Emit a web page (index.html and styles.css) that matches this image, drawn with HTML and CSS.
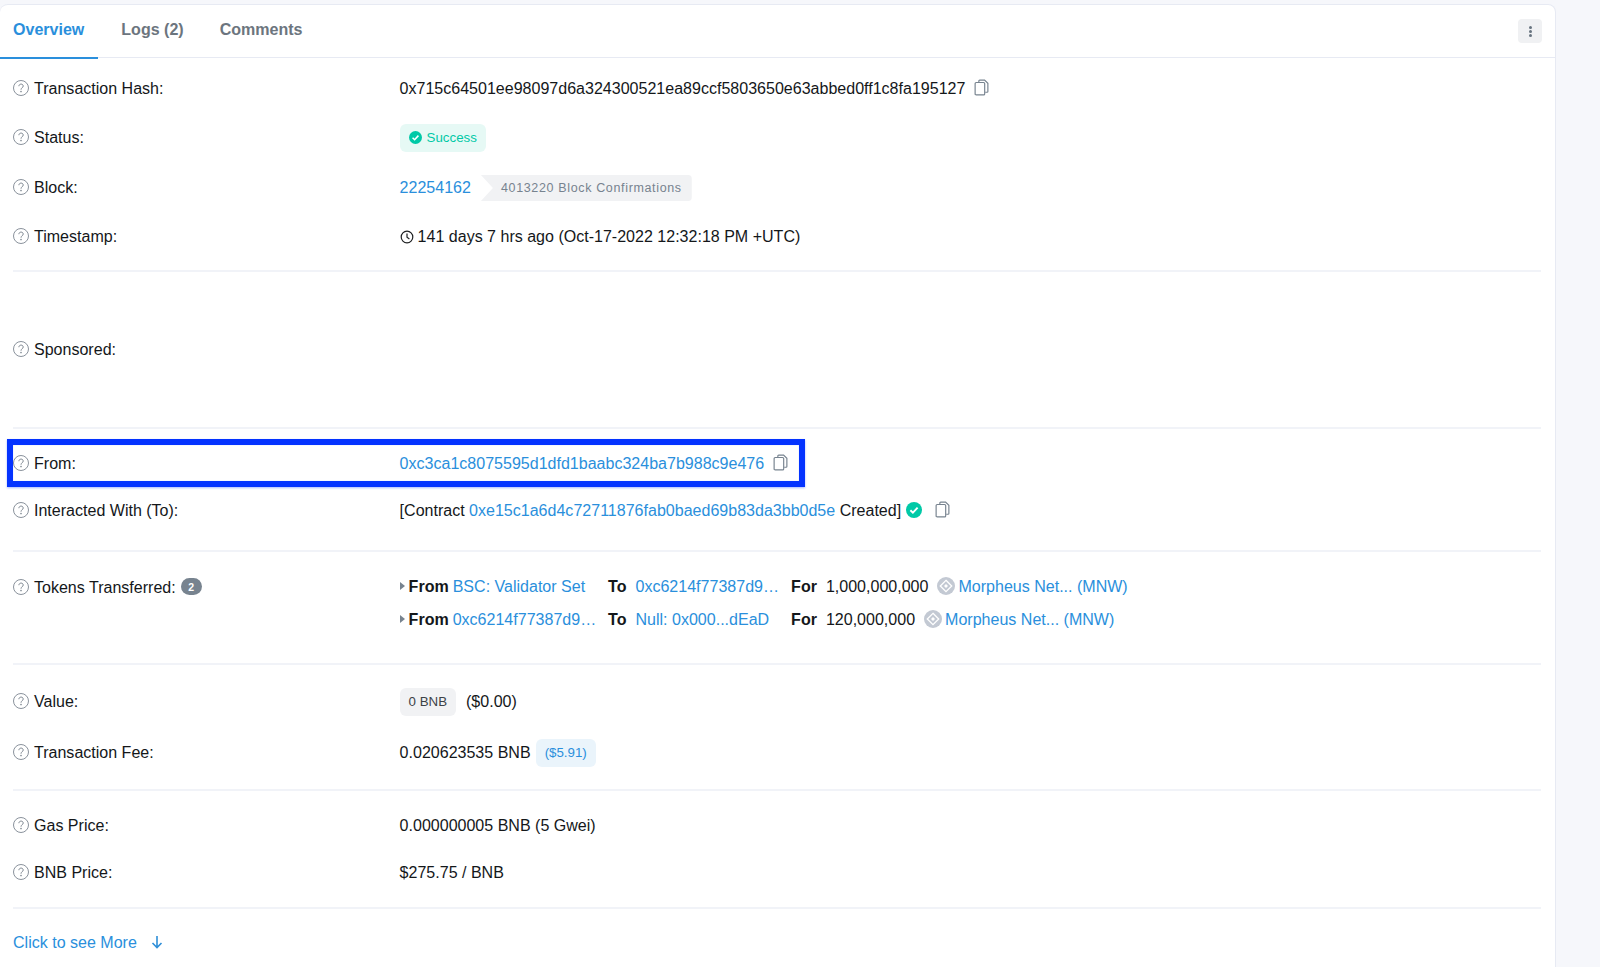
FILE: index.html
```html
<!DOCTYPE html>
<html lang="en">
<head>
<meta charset="utf-8">
<title>Transaction Details</title>
<link rel="stylesheet" href="styles.css">
</head>
<body>
<svg class="sprite" aria-hidden="true">
  <symbol id="q" viewBox="0 0 16 16"><circle cx="8" cy="8" r="7.5" fill="none" stroke="#8a929c" stroke-width="1"/><path d="M5.9 6.2c0-1.3 1-2.1 2.2-2.1s2.1.8 2.1 1.9c0 1.8-2.2 1.8-2.2 3.7" fill="none" stroke="#7c858f" stroke-width="1"/><circle cx="8" cy="11.6" r=".8" fill="#7c858f"/></symbol>
  <symbol id="copy" viewBox="0 0 14 16"><path d="M4.5 3V1.8c0-.5.3-.8.8-.8h4.6l3.1 3.1v7.6c0 .5-.3.8-.8.8H10.500" fill="none" stroke="#77838f" stroke-width="1.100"/><rect x="1" y="3.300" width="9" height="11.700" rx="1" fill="#fff" stroke="#77838f" stroke-width="1.100"/></symbol>
  <symbol id="check" viewBox="0 0 16 16"><circle cx="8" cy="8" r="8" fill="#00c9a7"/><path d="M4.400 8.300l2.500 2.400 4.700-5" fill="none" stroke="#fff" stroke-width="1.900"/></symbol>
  <symbol id="clock" viewBox="0 0 14 14"><circle cx="7" cy="7" r="5.800" fill="none" stroke="#1e2022" stroke-width="1.200"/><path d="M7 3.600V7.300l2.400 1.700" fill="none" stroke="#1e2022" stroke-width="1.200"/></symbol>
  <symbol id="coin" viewBox="0 0 18 18"><circle cx="9" cy="9" r="9" fill="#c3c9d3"/><path d="M9 3.300l5.700 5.700L9 14.700 3.300 9z" fill="none" stroke="#fff" stroke-width="1.300"/><path d="M9 7l2 2-2 2-2-2z" fill="#fff"/></symbol>
  <symbol id="arrow" viewBox="0 0 12 14"><path d="M6 1v11.500M1.500 8L6 12.500 10.500 8" fill="none" stroke="#2f8fd8" stroke-width="1.600"/></symbol>
</svg>

<main class="card">
  <header class="tabs">
    <a class="tab tab-active">Overview</a>
    <a class="tab">Logs (2)</a>
    <a class="tab">Comments</a>
    <button class="kebab" aria-label="More"><i></i><i></i><i></i></button>
  </header>

  <section class="section s-top">
    <div class="row h49"><div class="label"><svg class="qi"><use href="#q"/></svg>Transaction Hash:</div>
      <div class="value">0x715c64501ee98097d6a324300521ea89ccf5803650e63abbed0ff1c8fa195127<svg class="copy gap-copy"><use href="#copy"/></svg></div></div>
    <div class="row h49 mb1"><div class="label"><svg class="qi"><use href="#q"/></svg>Status:</div>
      <div class="value"><span class="badge-success"><svg class="check-sm"><use href="#check"/></svg>Success</span></div></div>
    <div class="row h50"><div class="label"><svg class="qi"><use href="#q"/></svg>Block:</div>
      <div class="value"><a class="link">22254162</a><span class="confirm">4013220 Block Confirmations</span></div></div>
    <div class="row h47"><div class="label"><svg class="qi"><use href="#q"/></svg>Timestamp:</div>
      <div class="value"><svg class="clock"><use href="#clock"/></svg>141 days 7 hrs ago (Oct-17-2022 12:32:18 PM +UTC)</div></div>
  </section>

  <section class="section s-sponsor">
    <div class="row"><div class="label"><svg class="qi"><use href="#q"/></svg>Sponsored:</div></div>
  </section>

  <section class="section s-addr">
    <div class="row h47 highlighted"><div class="label"><svg class="qi"><use href="#q"/></svg>From:</div>
      <div class="value"><a class="link">0xc3ca1c8075595d1dfd1baabc324ba7b988c9e476</a><svg class="copy gap-copy"><use href="#copy"/></svg></div></div>
    <div class="row h47"><div class="label"><svg class="qi"><use href="#q"/></svg>Interacted With (To):</div>
      <div class="value">[Contract&nbsp;<a class="link">0xe15c1a6d4c72711876fab0baed69b83da3bb0d5e</a>&nbsp;Created]<svg class="check-md"><use href="#check"/></svg><svg class="copy gap-copy2"><use href="#copy"/></svg></div></div>
  </section>

  <section class="section s-tokens">
    <div class="row-top">
      <div class="label label-line"><svg class="qi"><use href="#q"/></svg>Tokens Transferred:<span class="count">2</span></div>
      <div class="transfers">
        <div class="transfer">
          <span class="t-from"><i class="caret"></i><b>From</b><a class="link">BSC: Validator Set</a></span>
          <span class="t-to"><b>To</b><a class="link">0xc6214f77387d9…</a></span>
          <span class="t-for"><b>For</b><span>1,000,000,000</span><svg class="coin"><use href="#coin"/></svg><a class="link">Morpheus Net... (MNW)</a></span>
        </div>
        <div class="transfer">
          <span class="t-from"><i class="caret"></i><b>From</b><a class="link">0xc6214f77387d9…</a></span>
          <span class="t-to"><b>To</b><a class="link">Null: 0x000...dEaD</a></span>
          <span class="t-for"><b>For</b><span>120,000,000</span><svg class="coin"><use href="#coin"/></svg><a class="link">Morpheus Net... (MNW)</a></span>
        </div>
      </div>
    </div>
  </section>

  <section class="section s-value">
    <div class="row h51"><div class="label"><svg class="qi"><use href="#q"/></svg>Value:</div>
      <div class="value"><span class="badge-grey">0 BNB</span>($0.00)</div></div>
    <div class="row h51"><div class="label"><svg class="qi"><use href="#q"/></svg>Transaction Fee:</div>
      <div class="value">0.020623535 BNB<span class="badge-blue">($5.91)</span></div></div>
  </section>

  <section class="section s-gas">
    <div class="row h48"><div class="label"><svg class="qi"><use href="#q"/></svg>Gas Price:</div>
      <div class="value">0.000000005 BNB (5 Gwei)</div></div>
    <div class="row h46"><div class="label"><svg class="qi"><use href="#q"/></svg>BNB Price:</div>
      <div class="value">$275.75 / BNB</div></div>
  </section>

  <footer class="more"><a class="link">Click to see More</a><svg class="arrow"><use href="#arrow"/></svg></footer>
</main>
</body>
</html>
```
FILE: styles.css
```css
*, *::after { box-sizing: border-box; }
html, body { height: 100%; }
body {
  margin: 0;
  overflow: hidden;
  background: #f6f7fb;
  color: #14171a;
  font-family: "Liberation Sans", Arial, sans-serif;
  font-size: 16.050px;
  line-height: 20px;
}
.sprite { display: none; }
.card {
  width: 1556px;
  height: 975px;
  margin-top: 4px;
  background: #fff;
  border: 1px solid #e7eaf3;
  border-left: 0;
  border-radius: 8px;
}
.tabs {
  position: relative;
  display: flex;
  height: 53px;
  border-bottom: 1px solid #e7eaf3;
}
.tab {
  padding: 14px 13px 0;
  margin-right: 10px;
  font-weight: 700;
  color: #6c757e;
}
.tab-active {
  color: #2a8fdc;
  height: 54px;
  padding-right: 14px;
  border-bottom: 2px solid #2a8fdc;
  margin-right: 10px;
}
.kebab {
  position: absolute;
  right: 13px;
  top: 14px;
  display: flex;
  flex-direction: column;
  align-items: center;
  justify-content: center;
  gap: 1px;
  width: 24px;
  height: 24px;
  padding: 0;
  border: 0;
  border-radius: 4px;
  background: #f0f1f3;
}
.kebab i { width: 3px; height: 3px; border-radius: 50%; background: #67737f; }

.section { margin: 0 14px 0 13px; border-bottom: 2px solid #f1f3f8; }
.s-top { height: 214px; padding-top: 5px; }
.s-sponsor { height: 157px; display: flex; align-items: center; padding-bottom: 2px; }
.s-addr { height: 123px; padding-top: 10px; }
.s-tokens { height: 113px; padding-top: 18px; }
.s-value { height: 126px; padding-top: 10px; }
.s-gas { height: 118px; padding-top: 10px; }

.row { display: flex; align-items: center; position: relative; }
.row-top { display: flex; align-items: flex-start; }
.h46 { height: 46px; }
.h47 { height: 47px; }
.h48 { height: 48px; }
.h49 { height: 49px; }
.h50 { height: 50px; }
.h51 { height: 51px; }
.mb1 { margin-bottom: 1px; }
.label { display: flex; align-items: center; width: 386.600px; flex: none; }
.label-line { height: 33px; }
.value { display: flex; align-items: center; white-space: nowrap; }
.link { color: #2a8fdc; }
.qi { width: 16px; height: 16px; margin-right: 5px; flex: none; }
.copy { width: 15px; height: 17px; flex: none; }
.gap-copy { margin-left: 9px; }
.gap-copy2 { margin-left: 13px; }

.highlighted::after {
  content: "";
  position: absolute;
  left: -6px;
  top: 0;
  width: 798px;
  height: 48px;
  border: 6px solid #0433ff;
  box-shadow: 0 1px 2px rgba(4, 51, 255, .35), inset 0 0 1px rgba(4, 51, 255, .4);
  pointer-events: none;
}

.badge-success {
  display: inline-flex;
  align-items: center;
  height: 28px;
  margin-top: 2px;
  padding: 0 9px;
  border-radius: 6px;
  background: #e6f9f5;
  color: #00c9a7;
  font-size: 13.300px;
}
.check-sm { width: 13px; height: 13px; margin-right: 5px; }
.check-md { width: 16px; height: 16px; margin-left: 5px; }
.confirm {
  display: inline-flex;
  align-items: center;
  height: 26px;
  margin: 2px 0 0 10px;
  padding: 0 10px 0 20px;
  border-radius: 0 4px 4px 0;
  background: #f1f2f4;
  color: #77838f;
  font-size: 12.500px;
  letter-spacing: .65px;
  clip-path: polygon(0 0, 100% 0, 100% 100%, 0 100%, 12px 50%);
}
.clock { width: 14px; height: 14px; margin: 2px 4px 0 0; }

.count {
  display: inline-flex;
  align-items: center;
  justify-content: center;
  width: 21px;
  height: 17px;
  margin-left: 5px;
  border-radius: 9px;
  background: #77838f;
  color: #fff;
  font-size: 10.500px;
  font-weight: 700;
}
.transfers { margin-top: -1px; }
.transfer { display: flex; align-items: center; height: 33px; white-space: nowrap; }
.t-from { display: flex; align-items: center; width: 208.500px; flex: none; }
.t-to { display: flex; align-items: center; width: 183px; flex: none; }
.t-for { display: flex; align-items: center; }
.caret {
  width: 0;
  height: 0;
  margin-right: 5px;
  border-left: 5px solid #77838f;
  border-top: 4px solid transparent;
  border-bottom: 4px solid transparent;
}
.transfer b { margin-right: 4px; }
.t-from b { margin-left: -1px; }
.t-to b { margin-right: 9px; }
.t-for b { margin-right: 9px; }
.coin { width: 18px; height: 18px; margin: 0 3px 0 9px; flex: none; }

.badge-grey {
  display: inline-flex;
  align-items: center;
  height: 28px;
  margin-top: 2px;
  padding: 0 9px;
  margin-right: 10px;
  border-radius: 6px;
  background: #f1f2f4;
  color: #3c4247;
  font-size: 13.300px;
}
.badge-blue {
  display: inline-flex;
  align-items: center;
  height: 28px;
  margin-top: 2px;
  padding: 0 9px;
  margin-left: 5px;
  border-radius: 6px;
  background: #eaf4fb;
  color: #2a8fdc;
  font-size: 13.300px;
}
.more { display: flex; align-items: center; margin: 23px 0 0 13px; }
.arrow { width: 12px; height: 14px; margin-left: 14px; }
```
